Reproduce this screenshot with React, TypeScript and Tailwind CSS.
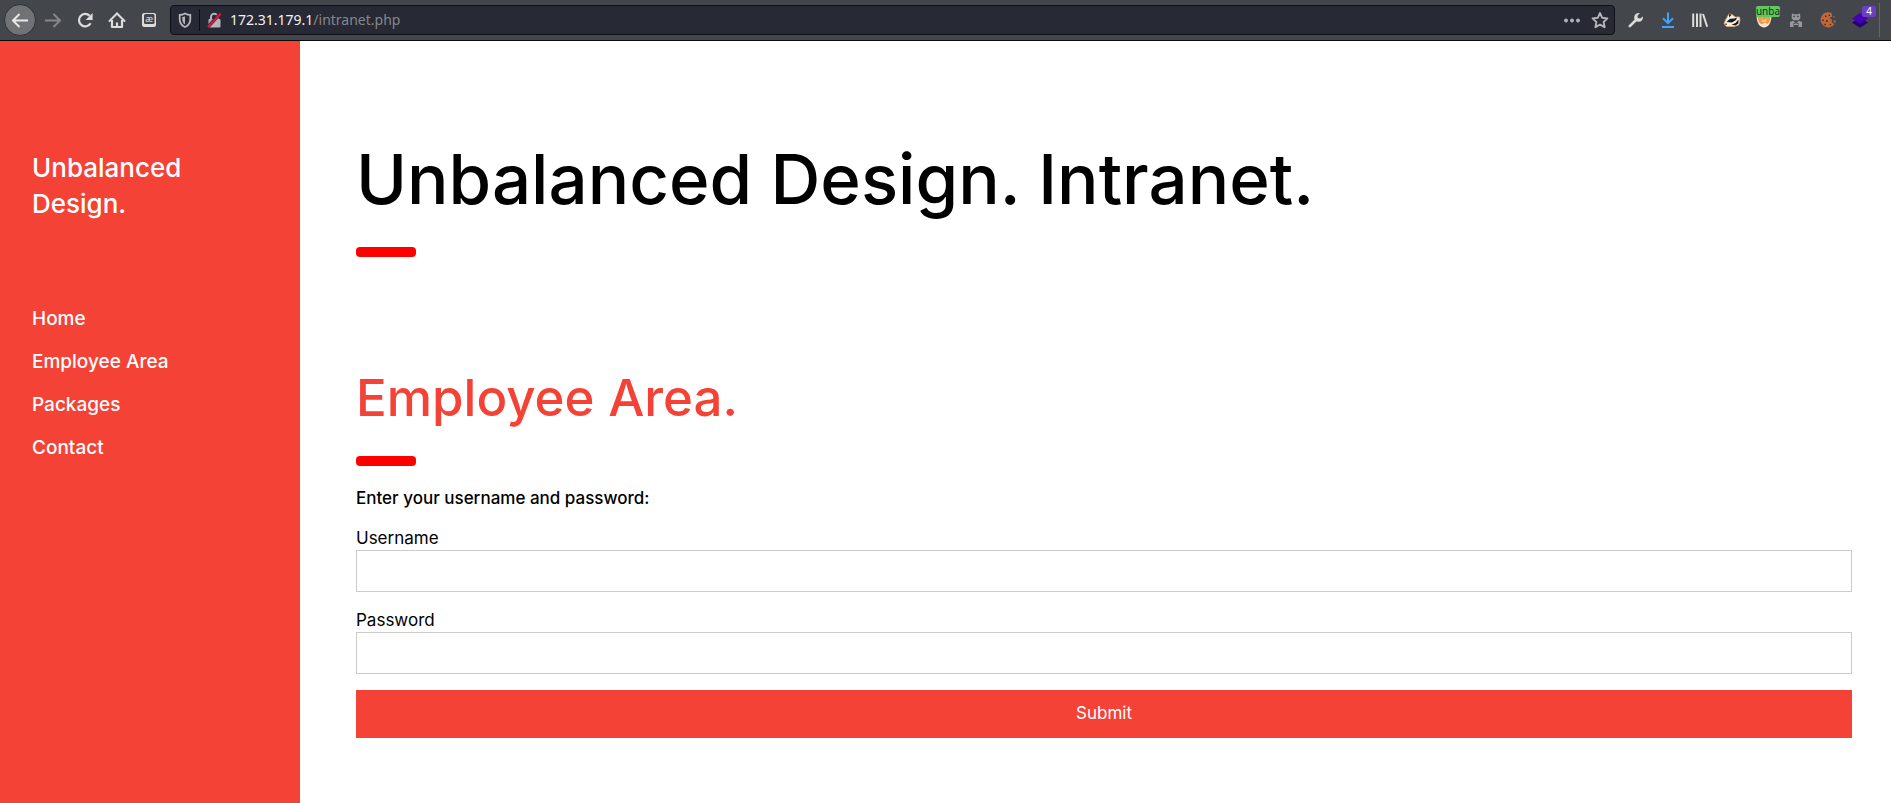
import React from "react";

type IconProps = { label: string; children: React.ReactNode; className?: string };

function ToolButton({ label, children, className = "" }: IconProps) {
  return (
    <button
      type="button"
      aria-label={label}
      className={`relative flex size-8 shrink-0 items-center justify-center ${className}`}
    >
      <svg viewBox="0 0 32 32" className="size-8" fill="none" aria-hidden="true">
        {children}
      </svg>
    </button>
  );
}

function Toolbar() {
  return (
    <header className="flex h-[41px] shrink-0 items-center border-b border-[#0c0c0d] bg-[#43464b] pr-[11px] pl-1 font-['Noto_Sans',sans-serif]">
      <button
        type="button"
        aria-label="Back"
        className="size-8 shrink-0 rounded-full border border-[#303236] bg-[#717276]"
      >
        <svg viewBox="1 1 30 30" fill="none" stroke="#e8e8e6" strokeWidth="2" aria-hidden="true">
          <path d="M24 16.5H9M15.5 10L9 16.5L15.5 23" />
        </svg>
      </button>
      <ToolButton label="Forward" className="ml-px">
        <path d="M8 16.5H23M16.5 10L23 16.5L16.5 23" stroke="#85878a" strokeWidth="2" />
      </ToolButton>
      <ToolButton label="Reload">
        <path d="M21.6 19.2A6.2 6.2 0 1 1 20.6 11.8" stroke="#dcdcda" strokeWidth="2.2" />
        <path d="M23.6 9V16H16.6Z" fill="#dcdcda" />
      </ToolButton>
      <ToolButton label="Home">
        <path d="M8.5 17L16 9.5L23.5 17" stroke="#dcdcda" strokeWidth="2" strokeLinecap="round" />
        <path d="M11 16V23H21V16M16 23V18.5" stroke="#dcdcda" strokeWidth="2.2" strokeLinejoin="round" />
      </ToolButton>
      <ToolButton label="Characters">
        <rect x="9" y="9" width="14" height="14" rx="2" fill="#dcdcda" />
        <rect x="11" y="10" width="10.5" height="10" rx="1.5" fill="#43464b" />
        <text x="16.2" y="17.6" textAnchor="middle" fontSize="9" fill="#dcdcda">æ</text>
      </ToolButton>

      <form className="ml-[5px] flex h-[30px] min-w-0 flex-1 items-center rounded-[4px] border border-[#101117] bg-[#272935]">
        <svg viewBox="0 0 28 28" className="size-7 shrink-0" fill="none" aria-hidden="true">
          <path d="M14 7.5C16 8.6 17.6 9 19.3 9V13C19.3 17 17.6 19.6 14 21C10.4 19.6 8.7 17 8.7 13V9C10.4 9 12 8.6 14 7.5Z" stroke="#b4b5b8" strokeWidth="1.8" />
          <path d="M14 10.2V18.4C12 17.2 11.3 15.5 11.3 13V11.1C12.4 11 13.2 10.7 14 10.2Z" fill="#b4b5b8" />
        </svg>
        <span className="h-[22px] w-px bg-[#0c0c12]" />
        <svg viewBox="0 0 28 28" className="size-7 shrink-0" fill="none" aria-hidden="true">
          <path d="M11 13V11A3.3 3.3 0 0 1 17.6 11V13" stroke="#b4b5b8" strokeWidth="2" />
          <rect x="8.5" y="13" width="12" height="8.5" rx="1" fill="#b4b5b8" />
          <path d="M8.2 20.6L20.4 7.4" stroke="#272935" strokeWidth="3.4" />
          <path d="M8 21L20.8 7.4" stroke="#e8103f" strokeWidth="2.2" />
        </svg>
        <span className="min-w-0 flex-1 truncate pl-0.5 text-[14px] leading-5 text-[#85868d]">
          <span className="text-[#f2f2f4]">172.31.179.1</span>/intranet.php
        </span>
        <button type="button" aria-label="Page actions" className="size-7">
          <svg viewBox="0 0 28 28" fill="#b4b5b8" aria-hidden="true">
            <circle cx="8" cy="14.5" r="1.9" />
            <circle cx="14" cy="14.5" r="1.9" />
            <circle cx="20" cy="14.5" r="1.9" />
          </svg>
        </button>
        <button type="button" aria-label="Bookmark" className="size-7">
          <svg viewBox="0 0 28 28" fill="none" stroke="#b4b5b8" strokeWidth="1.9" strokeLinejoin="round" aria-hidden="true">
            <path d="M14 7L16.2 11.8L21.4 12.4L17.6 16L18.6 21.2L14 18.7L9.4 21.2L10.4 16L6.6 12.4L11.8 11.8Z" />
          </svg>
        </button>
      </form>

      <ToolButton label="Developer tools" className="ml-[5px]">
        <path d="M9.8 22.2L16.5 15.5" stroke="#dcdcda" strokeWidth="2.6" strokeLinecap="round" />
        <path d="M19.8 9.2A4.4 4.4 0 1 0 22.9 12.6L20.2 14.6L17.8 14.1L17.4 11.7Z" fill="#dcdcda" />
      </ToolButton>
      <ToolButton label="Downloads">
        <path d="M16 8.5V19M11 14.2L16 19.2L21 14.2M10 23H22" stroke="#45a1ff" strokeWidth="2" />
      </ToolButton>
      <ToolButton label="Library">
        <path d="M9.2 9.5V23M13 9.5V23M16.5 9.5V23M19 10L23.2 22.8" stroke="#dcdcda" strokeWidth="2" />
      </ToolButton>
      <ToolButton label="Privacy Badger">
        <path d="M8 20L9.5 16L13 10L16 10.5L19 13L23.5 13L24 16L22.8 21L18.5 22.6L10.5 22.5Z" fill="#f4efe9" stroke="#e8a66c" strokeWidth="0.8" />
        <path d="M13 10L15.5 10.8L13.2 13.5Z" fill="#18191d" />
        <path d="M10.5 18L14 14.8L18.5 14.5L21 13.5L20 16L16 18.4Z" fill="#18191d" />
        <path d="M15.5 20.8L19.5 19L22.5 15.5L22.3 19.5L19.5 21.6Z" fill="#18191d" />
        <path d="M8.3 20.2L10.3 19.2L11 21Z" fill="#18191d" />
      </ToolButton>
      <div className="relative">
        <ToolButton label="Proxy">
          <path d="M8.5 12.5C9 19 11.5 23.4 16 23.4S23 19 23.5 12.5Z" fill="#f3e3d3" />
          <path d="M9.5 12.5C10 17 11.5 19.8 14 20.3L17 18.6L19.5 20C21.5 18.5 22.2 16 22.6 12.5Z" fill="#f19a42" />
          <path d="M13 14.5L16 16.2L19 14.5L17.5 18H14.5Z" fill="#f6c48d" />
        </ToolButton>
        <span className="absolute top-0.5 left-2 flex h-[11px] w-6 items-center justify-center rounded-[2px] bg-[#5fc95f] text-[10px] leading-[11px] text-[#14301a]">
          unba
        </span>
      </div>
      <ToolButton label="User agent">
        <path d="M12 9.2L13.8 10.2H18.2L20 9.2L20.4 14L18.6 16.3H13.4L11.6 14Z" fill="#98999c" />
        <path d="M13.3 12.5H15M17 12.5H18.7" stroke="#43464b" strokeWidth="1.3" />
        <path d="M10 18L13 16.8L16 19L19 16.8L22 18V23H18.5V21H13.5V23H10Z" fill="#98999c" />
        <path d="M13 20.2L16 18.6L19 20.2" stroke="#43464b" />
      </ToolButton>
      <ToolButton label="Cookies">
        <path d="M19.5 9A7.6 7.6 0 1 0 22.5 20L19.7 18.5L20 15.6L17.2 14.3L20.3 12.4Z" fill="#bd683a" />
        <path d="M13 11.5h1.5v1.5H13zM10.3 15.5h1.6V17h-1.6zM14.2 16.3h1.6v1.6h-1.6zM12.4 19.8h1.5v1.4h-1.5zM17.6 20h1.5v1.3h-1.5zM16.8 10.7h1.3V12h-1.3z" fill="#542918" />
        <path d="M21.3 12.2h1.4v1.4h-1.4zM21.7 16.6h2v2h-2z" fill="#bd683a" />
      </ToolButton>
      <div className="relative">
        <ToolButton label="Containers">
          <path d="M8 18.5L16 14L24 18.5L16 23.8Z" fill="#240071" />
          <path d="M8 14.5L16 9L24 14.5L16 20Z" fill="#4600b5" />
        </ToolButton>
        <span className="absolute top-0.5 left-[18px] h-[11px] w-3.5 rounded-[2px] bg-[#6a3fc4] text-center text-[10px] leading-[11px] text-white">
          4
        </span>
      </div>
      <span className="ml-[3px] h-[34px] w-px bg-[#63656a]" />
    </header>
  );
}

const links = ["Home", "Employee Area", "Packages", "Contact"];

function Sidebar() {
  return (
    <aside className="w-[300px] shrink-0 bg-[#f44336] px-8 text-white">
      <h3 className="w-40 pt-[109px] text-[26px] leading-9 font-medium">Unbalanced Design.</h3>
      <nav className="mt-[75px] flex flex-col text-[19px] leading-[43px] font-medium">
        {links.map((name) => (
          <a key={name} href="#">
            {name}
          </a>
        ))}
      </nav>
    </aside>
  );
}

function Rule() {
  return <hr className="h-[10px] w-[60px] rounded-[4px] border-0 bg-[#ff0000]" />;
}

function Field({ id, label, type }: { id: string; label: string; type: string }) {
  return (
    <div className="mb-4 flex flex-col">
      <label htmlFor={id} className="leading-6">
        {label}
      </label>
      <input id={id} type={type} className="h-[42px] w-full border border-[#cccccc] bg-white px-2 outline-none" />
    </div>
  );
}

export default function App() {
  return (
    <div className="flex min-h-screen flex-col bg-white">
      <Toolbar />
      <div className="flex flex-1 font-['Inter',sans-serif] text-[17px] text-black">
        <Sidebar />
        <main className="min-w-0 flex-1 pr-[39px] pl-14">
          <h1 className="pt-[90px] text-[69px] leading-24 font-medium">Unbalanced Design. Intranet.</h1>
          <div className="mt-5">
            <Rule />
          </div>
          <h2 className="mt-[105px] text-[51px] leading-[72px] font-medium text-[#f44336]">Employee Area.</h2>
          <div className="mt-[22px]">
            <Rule />
          </div>
          <p className="mt-5 leading-6 font-medium">Enter your username and password:</p>
          <form className="mt-4">
            <Field id="username" label="Username" type="text" />
            <Field id="password" label="Password" type="password" />
            <button type="button" className="h-12 w-full bg-[#f44336] text-center text-white">
              Submit
            </button>
          </form>
        </main>
      </div>
    </div>
  );
}
